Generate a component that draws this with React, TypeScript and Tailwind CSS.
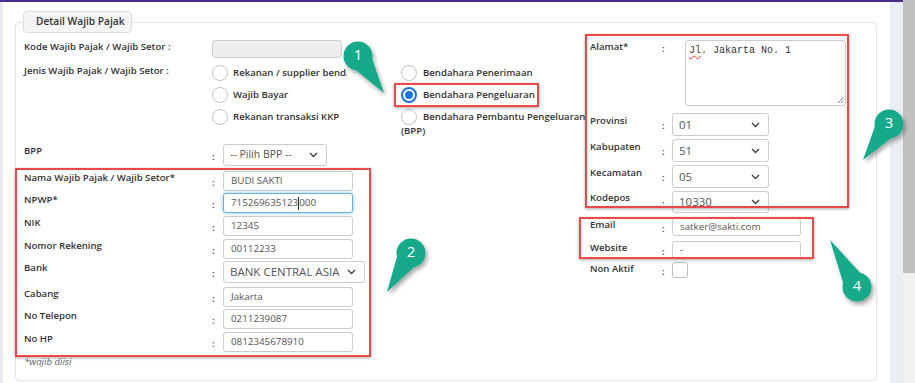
import React from 'react';

const lbl = "text-[9.6px] font-semibold text-[#333] leading-[14px] whitespace-nowrap"
const box = "border border-[#ccc] rounded-[3px] bg-white text-[#555] flex items-center"

function Chevron() {
    return (
        <svg width="9" height="6" viewBox="0 0 9 6" className="shrink-0">
            <path d="M1 1l3.5 3.5L8 1" fill="none" stroke="#444" strokeWidth="1.4" />
        </svg>
    )
}

function Select({ value, w, h, big, disabled }: { value: string, w: string, h: string, big?: boolean, disabled?: boolean }) {
    return (
        <div className={`${box} ${w} ${h} justify-between pl-[6px] pr-[8px] ${disabled ? 'bg-[#eee]' : ''} ${big ? 'text-[11.5px]' : 'text-[10.5px]'}`}>
            <span className="whitespace-nowrap">{value}</span>
            <Chevron />
        </div>
    )
}

function Input({ value, w, h }: { value: React.ReactNode, w: string, h: string }) {
    return <div className={`${box} ${w} ${h} pl-[7px] text-[9.8px]`}>{value}</div>
}

function Radio({ checked }: { checked?: boolean }) {
    return checked ? (
        <span className="w-[16px] h-[16px] rounded-full border-2 border-[#1a73e8] bg-white flex items-center justify-center shrink-0">
            <span className="w-[8px] h-[8px] rounded-full bg-[#1a73e8]" />
        </span>
    ) : (
        <span className="w-[16px] h-[16px] rounded-full border border-[#c4c4c4] bg-white shrink-0" />
    )
}

// left column row: label, colon, field
function Row({ label, h, colonPt, children }: { label: string, h: string, colonPt: string, children: React.ReactNode }) {
    return (
        <div className={`flex ${h}`}>
            <div className={`${lbl} w-[188px]`}>{label}</div>
            <div className={`${lbl} w-[11px] font-bold ${colonPt}`}>:</div>
            {children}
        </div>
    )
}

function RRow({ label, h, colonPt, lpt, children }: { label: string, h: string, colonPt: string, lpt?: string, children: React.ReactNode }) {
    return (
        <div className={`flex ${h}`}>
            <div className={`${lbl} w-[72px] ${lpt ?? ''}`}>{label}</div>
            <div className={`${lbl} w-[10px] font-bold ${colonPt}`}>:</div>
            {children}
        </div>
    )
}

function Callout({ cx, cy, tx, ty, n }: { cx: number, cy: number, tx: number, ty: number, n: string }) {
    const r = 14.5
    const a = Math.atan2(ty - cy, tx - cx)
    const d = 0.75
    const p1 = `${cx + r * Math.cos(a + d)},${cy + r * Math.sin(a + d)}`
    const p2 = `${cx + r * Math.cos(a - d)},${cy + r * Math.sin(a - d)}`
    return (
        <g>
            <g filter="url(#sh)">
                <circle cx={cx} cy={cy} r={r} fill="#12a98a" />
                <polygon points={`${p1} ${tx},${ty} ${p2}`} fill="#12a98a" />
            </g>
            <text x={cx} y={cy + 4} textAnchor="middle" fill="#fff" fontSize="15" fontFamily="Open Sans, sans-serif">{n}</text>
        </g>
    )
}

export default function App() {
    return (
        <div className="w-[915px] h-[383px] relative overflow-hidden flex bg-[#f1f1f1] font-['Open_Sans',sans-serif]">
            <div className="w-[903px] h-full flex border-t-2 border-[#4b2b8c]">
                <div className="w-[3px] bg-[#e8ecf2]" />
                <div className="w-[887px] bg-white pl-[12px] pr-[13px] pt-[20px]">
                    <div className="h-[359px] border border-[#e3e3e3] rounded-[4px]">
                        <div className="-mt-[12px] ml-[7px] w-[109px] h-[22px] bg-[#f5f5f5] border border-[#dcdcdc] rounded-[4px] pl-[12px] text-[10.2px] font-semibold text-[#333] flex items-center">
                            Detail Wajib Pajak
                        </div>

                        <div className="flex mt-[7px] pl-[8px]">
                            {/* left column */}
                            <div className="w-[566px] flex flex-col">
                                <div className="flex h-[22px]">
                                    <div className={`${lbl} w-[188px]`}>Kode Wajib Pajak / Wajib Setor :</div>
                                    <div className="w-[130px] h-[18px] bg-[#eee] border border-[#ccc] rounded-[4px]" />
                                </div>
                                <div className="flex h-[82px]">
                                    <div className={`${lbl} w-[188px] pt-[2px]`}>Jenis Wajib Pajak / Wajib Setor :</div>
                                    <div className="w-[189px] flex flex-col">
                                        <div className="h-[22px] flex items-center gap-[5px]">
                                            <Radio />
                                            <span className={`${lbl} max-w-[114px] overflow-hidden`}>Rekanan / supplier bendahara</span>
                                        </div>
                                        <div className="h-[22px] flex items-center gap-[5px]"><Radio /><span className={lbl}>Wajib Bayar</span></div>
                                        <div className="h-[22px] flex items-center gap-[5px]"><Radio /><span className={lbl}>Rekanan transaksi KKP</span></div>
                                    </div>
                                    <div className="flex flex-col">
                                        <div className="h-[22px] flex items-center gap-[6px]"><Radio /><span className={lbl}>Bendahara Penerimaan</span></div>
                                        <div className="h-[22px] flex items-center gap-[6px]"><Radio checked /><span className={lbl}>Bendahara Pengeluaran</span></div>
                                        <div className="h-[22px] flex items-center gap-[6px]"><Radio /><span className={lbl}>Bendahara Pembantu Pengeluaran</span></div>
                                        <div className={`${lbl} -mt-[4px]`}>(BPP)</div>
                                    </div>
                                </div>
                                <Row label="BPP" h="h-[27px]" colonPt="pt-[6px]">
                                    <Select value="-- Pilih BPP --" w="w-[104px]" h="h-[22px]" disabled />
                                </Row>
                                <Row label="Nama Wajib Pajak / Wajib Setor*" h="h-[22px]" colonPt="pt-[5px]">
                                    <Input value="BUDI SAKTI" w="w-[130px]" h="h-[20px]" />
                                </Row>
                                <Row label="NPWP*" h="h-[23px]" colonPt="pt-[5px]">
                                    <div className="w-[130px] h-[20px] border border-[#66afe9] rounded-[3px] bg-white text-[#555] flex items-center pl-[7px] text-[9.8px] shadow-[0_0_4px_rgba(102,175,233,0.7)]">
                                        715269635123<span className="inline-block w-px h-[13px] bg-[#333]" />000
                                    </div>
                                </Row>
                                <Row label="NIK" h="h-[23px]" colonPt="pt-[5px]">
                                    <Input value="12345" w="w-[130px]" h="h-[20px]" />
                                </Row>
                                <Row label="Nomor Rekening" h="h-[22px]" colonPt="pt-[5px]">
                                    <Input value="00112233" w="w-[130px]" h="h-[20px]" />
                                </Row>
                                <Row label="Bank" h="h-[26px]" colonPt="pt-[6px]">
                                    <Select value="BANK CENTRAL ASIA" w="w-[142px]" h="h-[22px]" big />
                                </Row>
                                <Row label="Cabang" h="h-[22px]" colonPt="pt-[5px]">
                                    <Input value="Jakarta" w="w-[130px]" h="h-[20px]" />
                                </Row>
                                <Row label="No Telepon" h="h-[23px]" colonPt="pt-[5px]">
                                    <Input value="0211239087" w="w-[130px]" h="h-[20px]" />
                                </Row>
                                <Row label="No HP" h="h-[23px]" colonPt="pt-[5px]">
                                    <Input value="0812345678910" w="w-[130px]" h="h-[20px]" />
                                </Row>
                                <div className="text-[9.6px] italic text-[#666] leading-[14px]">*wajib diisi</div>
                            </div>

                            {/* right column */}
                            <div className="w-[286px] flex flex-col">
                                <RRow label="Alamat*" h="h-[73px]" colonPt="pt-[2px]">
                                    <div className="ml-[13px] w-[161px] h-[66px] border border-[#ccc] rounded-[3px] bg-white relative pl-[3px] pt-[3px] font-['Liberation_Mono',monospace] text-[10px] text-[#333] leading-[14px]">
                                        <span className="underline decoration-wavy decoration-[#e33] underline-offset-2">Jl</span>. Jakarta No. 1
                                        <svg width="8" height="8" viewBox="0 0 8 8" className="absolute right-[1px] bottom-[1px]">
                                            <path d="M7 2L2 7M7 5L5 7" stroke="#888" strokeWidth="1" />
                                        </svg>
                                    </div>
                                </RRow>
                                <RRow label="Provinsi" h="h-[26px]" colonPt="pt-[6px]" lpt="pt-[1px]">
                                    <Select value="01" w="w-[97px]" h="h-[23px]" big />
                                </RRow>
                                <RRow label="Kabupaten" h="h-[26px]" colonPt="pt-[6px]" lpt="pt-[1px]">
                                    <Select value="51" w="w-[97px]" h="h-[23px]" big />
                                </RRow>
                                <RRow label="Kecamatan" h="h-[26px]" colonPt="pt-[6px]" lpt="pt-[1px]">
                                    <Select value="05" w="w-[97px]" h="h-[23px]" big />
                                </RRow>
                                <RRow label="Kodepos" h="h-[27px]" colonPt="pt-[6px]">
                                    <Select value="10330" w="w-[97px]" h="h-[22px]" big />
                                </RRow>
                                <RRow label="Email" h="h-[23px]" colonPt="pt-[4px]">
                                    <Input value="satker@sakti.com" w="w-[129px]" h="h-[18px]" />
                                </RRow>
                                <RRow label="Website" h="h-[21px]" colonPt="pt-[4px]">
                                    <Input value="-" w="w-[129px]" h="h-[18px]" />
                                </RRow>
                                <RRow label="Non Aktif" h="h-[20px]" colonPt="pt-[3px]">
                                    <div className="w-[16px] h-[16px] border border-[#bbb] rounded-[3px] bg-white" />
                                </RRow>
                            </div>
                        </div>
                    </div>
                </div>
                <div className="w-[13px] bg-[#e9edf4]" />
            </div>
            <div className="w-[12px] flex flex-col">
                <div className="h-[273px] bg-[#c1c1c1]" />
                <div className="flex-1 bg-[#f1f1f1]" />
            </div>

            {/* annotation overlays */}
            <div className="absolute left-[394px] top-[83px] w-[145px] h-[24px] border-2 border-[#f04848] shadow-[0_1px_3px_rgba(0,0,0,0.35)]" />
            <div className="absolute left-[15px] top-[168px] w-[356px] h-[189px] border-2 border-[#f04848] shadow-[0_1px_3px_rgba(0,0,0,0.35)]" />
            <div className="absolute left-[585px] top-[34px] w-[264px] h-[174px] border-2 border-[#f04848] shadow-[0_1px_3px_rgba(0,0,0,0.35)]" />
            <div className="absolute left-[579px] top-[217px] w-[235px] h-[42px] border-2 border-[#f04848] shadow-[0_1px_3px_rgba(0,0,0,0.35)]" />

            <svg width="915" height="383" className="absolute left-0 top-0 pointer-events-none">
                <defs>
                    <filter id="sh" x="-50%" y="-50%" width="200%" height="200%">
                        <feDropShadow dx="2" dy="3" stdDeviation="2" floodColor="#000" floodOpacity="0.35" />
                    </filter>
                </defs>
                <Callout cx={358} cy={56} tx={384} ty={93} n="1" />
                <Callout cx={411} cy={253} tx={387} ty={292} n="2" />
                <Callout cx={889} cy={124} tx={863} ty={160} n="3" />
                <Callout cx={857} cy={287} tx={830} ty={240} n="4" />
            </svg>
        </div>
    )
}
